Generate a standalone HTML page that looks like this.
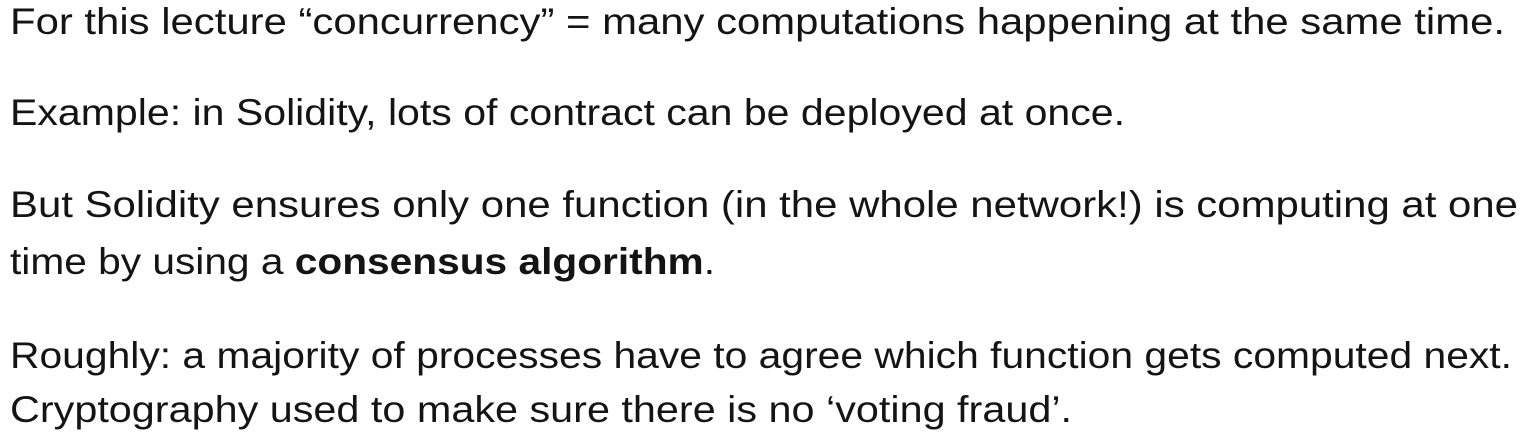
<!DOCTYPE html>
<html><head><meta charset="utf-8">
<style>
html,body{margin:0;padding:0;background:#fff;}
body{width:1536px;height:448px;position:relative;overflow:hidden;font-family:"Liberation Sans",sans-serif;color:#141414;}
.l{position:absolute;left:10px;font-size:37px;line-height:44px;white-space:nowrap;transform-origin:0 50%;}
b{font-weight:bold;}
</style></head><body>
<div class="l" data-w="1495" style="top:0px">For this lecture “concurrency” = many computations happening at the same time.</div>
<div class="l" data-w="1115" style="top:91px">Example: in Solidity, lots of contract can be deployed at once.</div>
<div class="l" data-w="1508" style="top:183px">But Solidity ensures only one function (in the whole network!) is computing at one</div>
<div class="l" data-w="705" style="top:240px">time by using a <b>consensus algorithm</b>.</div>
<div class="l" data-w="1502" style="top:334px">Roughly: a majority of processes have to agree which function gets computed next.</div>
<div class="l" data-w="1062" style="top:388px">Cryptography used to make sure there is no ‘voting fraud’.</div>
<script>
document.querySelectorAll('.l').forEach(function(e){
  var w=e.getBoundingClientRect().width, t=+e.getAttribute('data-w');
  e.style.transform='scaleX('+(t/w)+')';
});
</script>
</body></html>
